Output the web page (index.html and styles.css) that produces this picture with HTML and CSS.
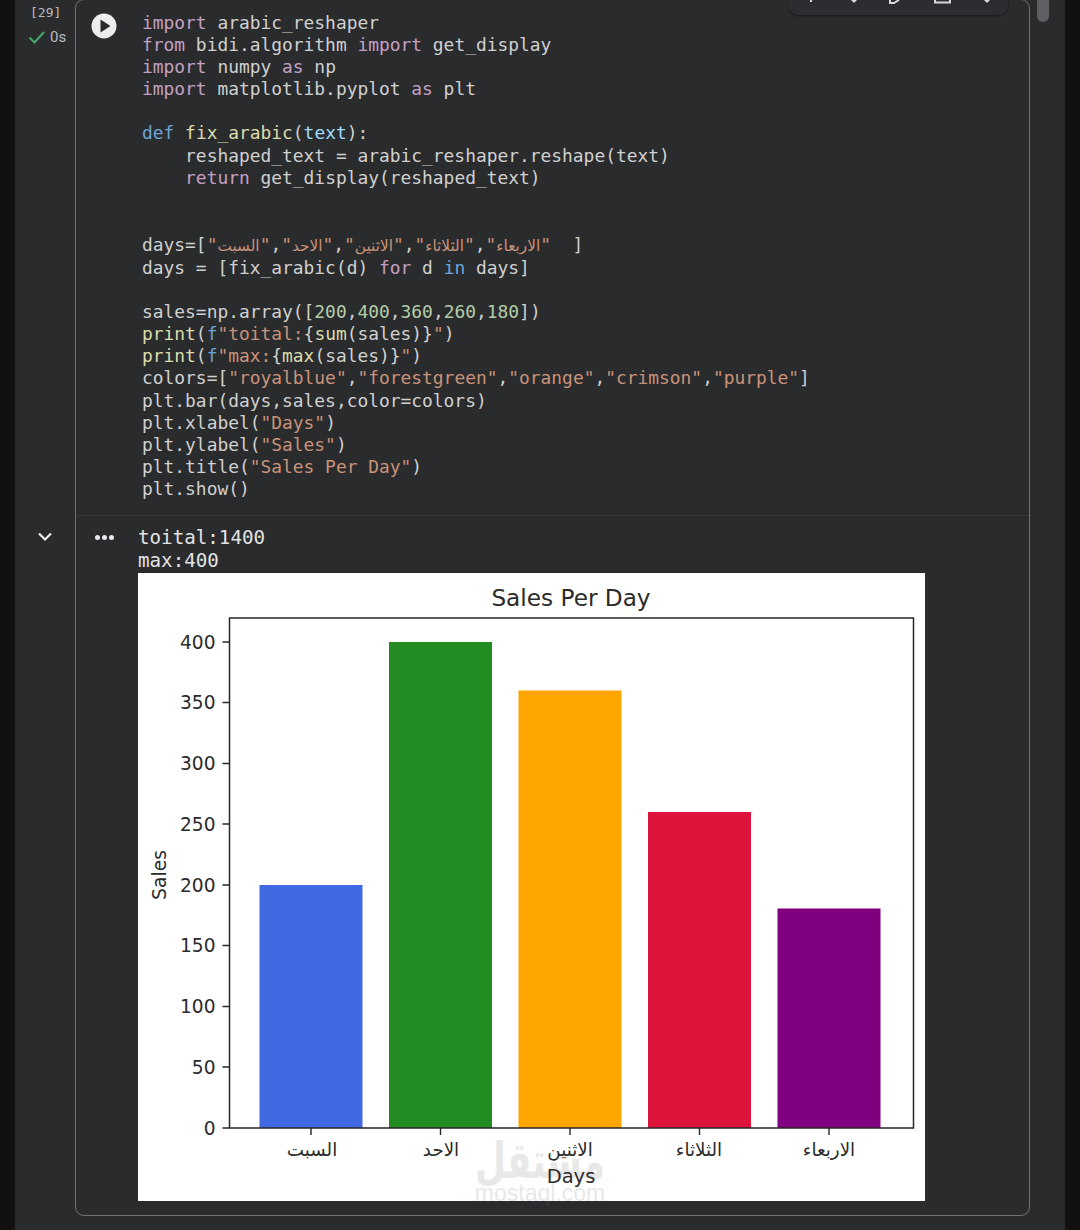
FILE: index.html
```html
<!DOCTYPE html>
<html lang="en">
<head>
    <meta charset="UTF-8">
    <meta name="viewport" content="width=device-width, initial-scale=1.0">
    <title>Notebook cell</title>
    <link rel="stylesheet" href="styles.css">
</head>
<body>

<div class="page">
    <div class="strip"></div>

    <div class="gutter">
        <div class="exec-info">
            <div class="exec-count">[29]</div>
            <div class="exec-status">
                <svg class="check" width="18" height="16" viewBox="0 0 18 16"><path d="M1.5 8.5 L6.5 13.5 L16 3" fill="none" stroke="#45a86a" stroke-width="2"/></svg>
                <span>0s</span>
            </div>
        </div>
        <div class="output-toggle">
            <svg width="16" height="10" viewBox="0 0 16 10"><path d="M2 1.5 L8 7.5 L14 1.5" fill="none" stroke="#e8eaed" stroke-width="2.2"/></svg>
        </div>
    </div>

    <div class="cell">
        <div class="toolbar">
            <svg class="tool-icons" width="220" height="4" viewBox="0 0 220 4">
                <rect x="22" y="0" width="2" height="2" fill="#d8d9db"/>
                <path d="M63 0H69L66 3Z" fill="#d8d9db"/>
                <path d="M102 0V3H106L111 0" fill="none" stroke="#d8d9db" stroke-width="2"/>
                <path d="M147 0V2.5H162V0" fill="none" stroke="#d8d9db" stroke-width="2"/>
                <path d="M196 0H202L199 3Z" fill="#d8d9db"/>
            </svg>
        </div>

        <div class="code-row">
            <div class="run-col">
                <svg width="26" height="26" viewBox="0 0 26 26"><circle cx="13" cy="13" r="12.5" fill="#eceded"/><path d="M9.5 6.5 L19.5 13 L9.5 19.5 Z" fill="#2a2b2e"/></svg>
            </div>
            <div class="code">
                <div class="line"><span class="kw">import</span> arabic_reshaper</div>
                <div class="line"><span class="kw">from</span> bidi.algorithm <span class="kw">import</span> get_display</div>
                <div class="line"><span class="kw">import</span> numpy <span class="kw">as</span> np</div>
                <div class="line"><span class="kw">import</span> matplotlib.pyplot <span class="kw">as</span> plt</div>
                <div class="line"></div>
                <div class="line"><span class="def">def</span> <span class="fn">fix_arabic</span>(<span class="var">text</span>):</div>
                <div class="line">    reshaped_text = arabic_reshaper.reshape(text)</div>
                <div class="line">    <span class="kw">return</span> get_display(reshaped_text)</div>
                <div class="line"></div>
                <div class="line"></div>
                <div class="line ar-line">days=[<span class="str">"</span><span class="ar">السبت</span><span class="str">"</span>,<span class="str">"</span><span class="ar">الاحد</span><span class="str">"</span>,<span class="str">"</span><span class="ar">الاثنين</span><span class="str">"</span>,<span class="str">"</span><span class="ar">الثلاثاء</span><span class="str">"</span>,<span class="str">"</span><span class="ar">الاربعاء</span><span class="str">"</span>  ]</div>
                <div class="line">days = [fix_arabic(d) <span class="kw">for</span> d <span class="def">in</span> days]</div>
                <div class="line"></div>
                <div class="line">sales=np.array([<span class="num">200</span>,<span class="num">400</span>,<span class="num">360</span>,<span class="num">260</span>,<span class="num">180</span>])</div>
                <div class="line"><span class="fn">print</span>(<span class="def">f</span><span class="str">"toital:</span>{<span class="fn">sum</span>(sales)}<span class="str">"</span>)</div>
                <div class="line"><span class="fn">print</span>(<span class="def">f</span><span class="str">"max:</span>{<span class="fn">max</span>(sales)}<span class="str">"</span>)</div>
                <div class="line">colors=[<span class="str">"royalblue"</span>,<span class="str">"forestgreen"</span>,<span class="str">"orange"</span>,<span class="str">"crimson"</span>,<span class="str">"purple"</span>]</div>
                <div class="line">plt.bar(days,sales,color=colors)</div>
                <div class="line">plt.xlabel(<span class="str">"Days"</span>)</div>
                <div class="line">plt.ylabel(<span class="str">"Sales"</span>)</div>
                <div class="line">plt.title(<span class="str">"Sales Per Day"</span>)</div>
                <div class="line">plt.show()</div>
            </div>
        </div>

        <div class="output-row">
            <div class="output-menu"><i></i><i></i><i></i></div>
            <div class="output-body">
                <div class="stdout">
                    <div>toital:1400</div>
                    <div>max:400</div>
                </div>
                <svg class="chart" width="787" height="628" viewBox="138 573 787 628">
                    <rect x="138" y="573" width="787" height="628" fill="#fff"/>

                    <rect x="259.5" y="885" width="103" height="243" fill="#4169e1"/>
                    <rect x="389" y="642" width="103" height="486" fill="#228b22"/>
                    <rect x="518.5" y="690.5" width="103" height="437.5" fill="#ffa500"/>
                    <rect x="648" y="812" width="103" height="316" fill="#dc143c"/>
                    <rect x="777.5" y="908.5" width="103" height="219.5" fill="#800080"/>

                    <rect x="229.5" y="618" width="684" height="510" fill="none" stroke="#262626" stroke-width="1.5"/>

                    <path class="ticks" d="M222.5 1128H229.5M222.5 1067H229.5M222.5 1006.5H229.5M222.5 945.5H229.5M222.5 885H229.5M222.5 824H229.5M222.5 763.5H229.5M222.5 702.5H229.5M222.5 642H229.5M311 1128V1135M440.5 1128V1135M570 1128V1135M699.5 1128V1135M829 1128V1135"/>

                    <text class="mark-ar" x="540" y="1178" textLength="130" lengthAdjust="spacingAndGlyphs">مستقل</text>
                    <text class="mark-en" x="540" y="1201">mostaql.com</text>

                    <g class="ylabels">
                        <text x="215.5" y="1134.5">0</text>
                        <text x="215.5" y="1073.5">50</text>
                        <text x="215.5" y="1013">100</text>
                        <text x="215.5" y="952">150</text>
                        <text x="215.5" y="891.5">200</text>
                        <text x="215.5" y="830.5">250</text>
                        <text x="215.5" y="770">300</text>
                        <text x="215.5" y="709">350</text>
                        <text x="215.5" y="648.5">400</text>
                    </g>
                    <g class="xlabels">
                        <text x="312" y="1156">السبت</text>
                        <text x="441" y="1156">الاحد</text>
                        <text x="570" y="1156">الاثنين</text>
                        <text x="699" y="1156">الثلاثاء</text>
                        <text x="829" y="1156">الاربعاء</text>
                    </g>
                    <text class="title" x="571" y="606">Sales Per Day</text>
                    <text class="axis-label" x="571" y="1182.5">Days</text>
                    <text class="axis-label y-label" transform="translate(166 875) rotate(-90)">Sales</text>
                </svg>
            </div>
        </div>
    </div>

    <div class="scroll-track"><div class="scroll-thumb"></div></div>
    <div class="strip-right"></div>
</div>

</body>
</html>
```

FILE: styles.css
```css
body {
    margin: 0;
    background: #2a2b2d;
    color: #d0d0d0;
    font-family: "DejaVu Sans Mono", monospace;
    overflow: hidden;
}

.page {
    display: flex;
    height: 1230px;
    width: 1080px;
    overflow: hidden;
}

.strip,
.strip-right {
    width: 15px;
    flex: none;
    background: #111;
}

/* execution count column */
.gutter {
    width: 60px;
    flex: none;
    position: relative;
}

.exec-info {
    padding-top: 4px;
    padding-left: 15px;
    color: #b9bbbe;
}

.exec-count {
    font-size: 13px;
    line-height: 17px;
}

.exec-status {
    display: flex;
    align-items: center;
    gap: 4px;
    margin-top: 8px;
    margin-left: -2px;
    font-family: Roboto, sans-serif;
    font-size: 15px;
    line-height: 16px;
}

.output-toggle {
    position: absolute;
    top: 532px;
    left: 22px;
    line-height: 0;
}

/* the cell */
.cell {
    width: 955px;
    height: 1217px;
    flex: none;
    box-sizing: border-box;
    margin-top: -1px;
    border: 1px solid #707174;
    border-radius: 9px;
    position: relative;
}

.toolbar {
    position: absolute;
    top: -12px;
    right: 21px;
    width: 220px;
    height: 27px;
    background: #2c2d30;
    border-radius: 10px;
    box-shadow: 0 1px 2px rgba(0, 0, 0, 0.45);
}

.tool-icons {
    position: absolute;
    top: 12px;
    left: 0;
}

.code-row {
    display: flex;
    height: 515px;
    border-bottom: 1px solid #37383b;
}

.run-col {
    width: 66px;
    flex: none;
    padding: 13px 0 0 15px;
    box-sizing: border-box;
}

.code {
    margin-top: 12px;
    font-size: 17.9px;
}

.line {
    height: 22.1px;
    line-height: 22.1px;
    white-space: pre;
}

.ar-line {
    height: 24px;
    line-height: 24px;
}

.kw { color: #c3a0c2; }
.def { color: #6ca6d8; }
.fn { color: #dcdcaa; }
.var { color: #9cdcfe; }
.str { color: #c9927a; }
.num { color: #b5cea8; }

.ar {
    color: #c9927a;
    font-family: "DejaVu Sans", sans-serif;
    font-size: 15.3px;
    unicode-bidi: isolate;
    direction: rtl;
}

/* output */
.output-row {
    display: flex;
}

.output-menu {
    width: 56px;
    margin-right: 6px;
    flex: none;
    display: flex;
    justify-content: center;
    gap: 2px;
    padding-top: 19px;
    box-sizing: border-box;
    height: 30px;
}

.output-menu i {
    width: 5px;
    height: 5px;
    border-radius: 50%;
    background: #e8eaed;
}

.stdout {
    margin: 10px 0 1px 0;
    font-size: 19.2px;
    line-height: 23px;
    color: #e3e3e3;
}

.chart {
    display: block;
    overflow: visible;
}

.ticks {
    fill: none;
    stroke: #262626;
    stroke-width: 1.4;
}

.chart text {
    font-family: "DejaVu Sans", sans-serif;
    fill: #2b2b2b;
}

.ylabels text {
    font-size: 18.6px;
    text-anchor: end;
}

.xlabels text {
    font-size: 18.3px;
    text-anchor: middle;
}

.chart .title {
    font-size: 23.2px;
    text-anchor: middle;
}

.chart .axis-label {
    font-size: 19.5px;
    text-anchor: middle;
}

.chart .y-label {
    font-size: 18.8px;
}

/* site watermark baked into the screenshot */
.chart .mark-ar {
    font-size: 50px;
    font-weight: bold;
    text-anchor: middle;
    fill: #e8e8e8;
}

.chart .mark-en {
    font-family: "Liberation Sans", sans-serif;
    font-size: 23px;
    text-anchor: middle;
    fill: rgba(130, 130, 130, 0.2);
}

/* scrollbar on the right */
.scroll-track {
    width: 35px;
    flex: none;
    padding-left: 7px;
    box-sizing: border-box;
}

.scroll-thumb {
    width: 12px;
    height: 22px;
    border-radius: 0 0 6px 6px;
    background: #5f6064;
}
```
